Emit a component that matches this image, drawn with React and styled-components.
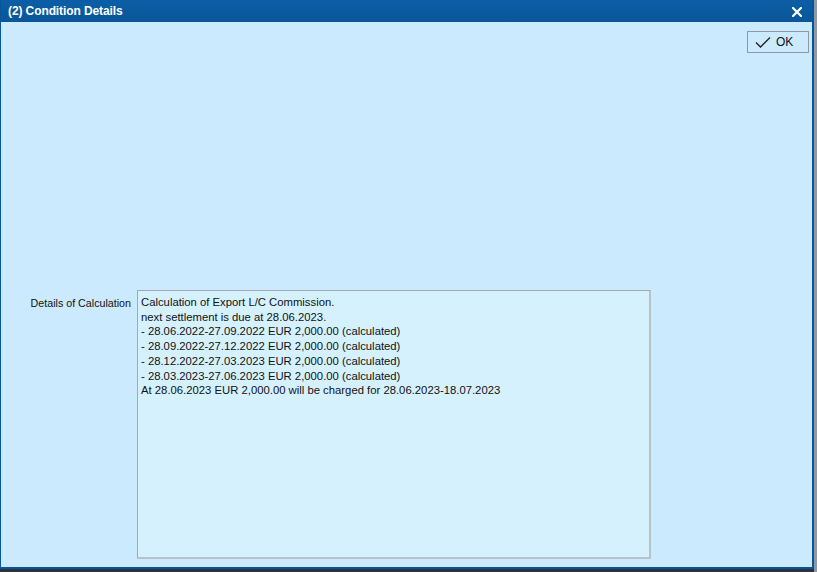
import React from 'react';
import styled, { createGlobalStyle } from 'styled-components';

const GlobalStyle = createGlobalStyle`
  html, body {
    margin: 0;
    padding: 0;
    background: #8d9aa5;
  }
  body {
    font-family: "Liberation Sans", Arial, sans-serif;
  }
`;

const lines = [
  'Calculation of Export L/C Commission.',
  'next settlement is due at 28.06.2023.',
  '- 28.06.2022-27.09.2022 EUR 2,000.00 (calculated)',
  '- 28.09.2022-27.12.2022 EUR 2,000.00 (calculated)',
  '- 28.12.2022-27.03.2023 EUR 2,000.00 (calculated)',
  '- 28.03.2023-27.06.2023 EUR 2,000.00 (calculated)',
  'At 28.06.2023 EUR 2,000.00 will be charged for 28.06.2023-18.07.2023',
];

function CheckIcon() {
  return (
    <svg width="16" height="12" viewBox="0 0 16 12">
      <path d="M1 6.5 L5.5 11 L15 1.5" fill="none" stroke="#222" strokeWidth="1.3" />
    </svg>
  );
}

function CloseIcon() {
  return (
    <svg width="10" height="10" viewBox="0 0 10 10">
      <path d="M1 1 L9 9 M9 1 L1 9" stroke="#fff" strokeWidth="2.2" strokeLinecap="square" />
    </svg>
  );
}

export default function App() {
  return (
    <Screen>
      <GlobalStyle />
      <Dialog>
        <TitleBar>
          <Title>(2) Condition Details</Title>
          <CloseButton>
            <CloseIcon />
          </CloseButton>
        </TitleBar>
        <Body>
          <Toolbar>
            <OkButton>
              <CheckIcon />
              OK
            </OkButton>
          </Toolbar>
          <FieldRow>
            <Label>Details of Calculation</Label>
            <TextBox>
              {lines.map((l, i) => (
                <div key={i}>{l}</div>
              ))}
            </TextBox>
          </FieldRow>
        </Body>
      </Dialog>
    </Screen>
  );
}

const Screen = styled.div`
  width: 817px;
  height: 572px;
  overflow: hidden;
  background: linear-gradient(#8d9aa5, #8d9aa5) right / 3px 100% no-repeat,
    #2f3336;
`;

const Dialog = styled.div`
  width: 814px;
  height: 569px;
  box-sizing: border-box;
  border-left: 1px solid #0a5599;
  border-right: 2px solid #0a5599;
  border-bottom: 2px solid #0a5599;
  background: #cbeafd;
  display: flex;
  flex-direction: column;
`;

const TitleBar = styled.div`
  height: 22px;
  flex: none;
  background: linear-gradient(#0b5ea6, #0a5698);
  display: flex;
  align-items: center;
  justify-content: space-between;
  padding: 0 10px 0 7px;
  color: #fff;
`;

const Title = styled.div`
  font-size: 12px;
  font-weight: bold;
  letter-spacing: -0.1px;
`;

const CloseButton = styled.div`
  display: flex;
  margin-top: 2px;
`;

const Body = styled.div`
  flex: 1;
  display: flex;
  flex-direction: column;
`;

const Toolbar = styled.div`
  display: flex;
  justify-content: flex-end;
  padding: 9px 3px 0 0;
  height: 268px;
  box-sizing: border-box;
`;

const OkButton = styled.div`
  width: 62px;
  height: 22px;
  box-sizing: border-box;
  border: 1px solid #8c9aa6;
  display: flex;
  align-items: center;
  gap: 5px;
  padding-left: 7px;
  font-size: 12px;
  color: #111;
`;

const FieldRow = styled.div`
  display: flex;
  align-items: flex-start;
  gap: 6px;
`;

const Label = styled.div`
  width: 130px;
  text-align: right;
  font-size: 10.7px;
  color: #111;
  padding-top: 7px;
`;

const TextBox = styled.div`
  width: 514px;
  height: 269px;
  box-sizing: border-box;
  border-top: 1px solid #a3a9ad;
  border-left: 1px solid #a3a9ad;
  border-right: 2px solid #b7c3cb;
  border-bottom: 2px solid #b7c3cb;
  background: #d6f1fe;
  padding: 4px 0 0 3px;
  font-size: 11.3px;
  line-height: 14.7px;
  color: #111;
`;
